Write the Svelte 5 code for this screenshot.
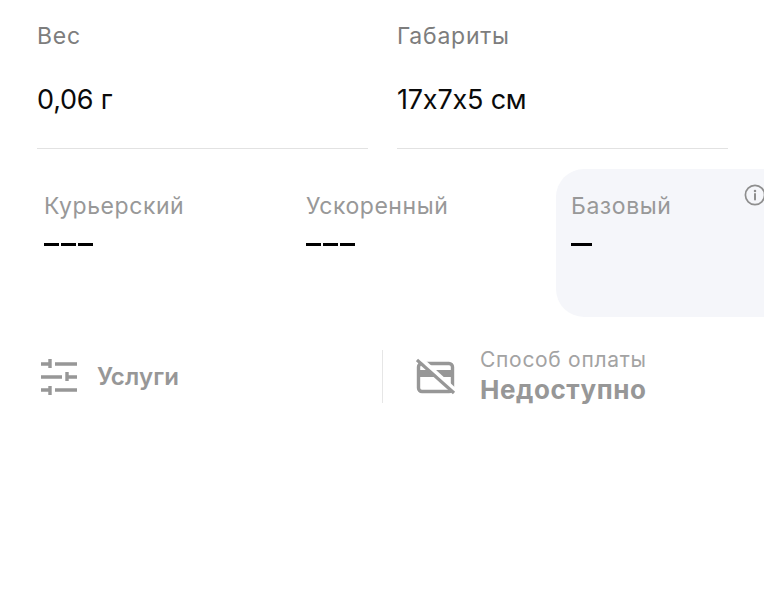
<script lang="ts">
	const specs = [
		{ label: "Вес", value: "0,06 г" },
		{ label: "Габариты", value: "17x7x5 см" }
	];
	const tariffs = [
		{ name: "Курьерский", price: "---" },
		{ name: "Ускоренный", price: "---" }
	];
</script>

<div class="page">
	<div class="specs">
		{#each specs as s}
			<div class="spec">
				<div class="spec-label">{s.label}</div>
				<div class="spec-value">{s.value}</div>
			</div>
		{/each}
	</div>

	<div class="tariffs">
		{#each tariffs as t}
			<div class="tariff">
				<div class="tariff-name">{t.name}</div>
				<div class="dashes">
					{#each t.price as _}
						<span class="dash"></span>
					{/each}
				</div>
			</div>
		{/each}
		<div class="tariff active">
			<div class="tariff-name">Базовый</div>
			<div class="dashes"><span class="dash long"></span></div>
			<svg class="info" width="22" height="22" viewBox="0 0 22 22" fill="none">
				<circle cx="11" cy="11" r="9.6" stroke="#8e8e8e" stroke-width="1.7" />
				<circle cx="11" cy="6.9" r="1.25" fill="#8e8e8e" />
				<path d="M11 10v5.6" stroke="#8e8e8e" stroke-width="2" stroke-linecap="round" />
			</svg>
		</div>
	</div>

	<div class="actions">
		<div class="services">
			<svg width="38" height="36" viewBox="0 0 38 36" fill="none" stroke="#979797" stroke-width="3.4">
				<path d="M1 5h8M10 0v9M15 5h22" />
				<path d="M1 18h21M27 13v9M27 18h10" />
				<path d="M1 31h8M10 27v9M15 31h22" />
			</svg>
			<span class="services-label">Услуги</span>
		</div>
		<div class="payment">
			<svg width="40" height="38" viewBox="0 0 40 38" fill="none">
				<rect x="2.5" y="5.5" width="34" height="28" rx="3.5" stroke="#979797" stroke-width="3.4" />
				<path d="M2 12h36v7H2z" fill="#979797" />
				<path d="M4 0l36 33" stroke="#fff" stroke-width="4" />
				<path d="M1 2l37 33" stroke="#979797" stroke-width="3.2" />
			</svg>
			<div class="payment-text">
				<div class="payment-label">Способ оплаты</div>
				<div class="payment-value">Недоступно</div>
			</div>
		</div>
	</div>
</div>

<style>
	:global(body) {
		background: #fff;
		overflow: hidden;
	}
	.page {
		width: 764px;
		height: 600px;
		overflow: hidden;
		font-family: Inter, "Liberation Sans", sans-serif;
	}
	.specs {
		display: grid;
		grid-template-columns: 331px 331px;
		column-gap: 29px;
		padding: 23px 0 0 37px;
	}
	.spec {
		height: 125px;
		border-bottom: 1.5px solid #e2e2e2;
	}
	.spec-label {
		font-size: 23px;
		line-height: 27px;
		color: #7d7d7d;
		letter-spacing: 0.75px;
	}
	.spec-value {
		margin-top: 35px;
		font-size: 27px;
		line-height: 30px;
		color: #0a0a0a;
		letter-spacing: -0.2px;
	}
	.tariffs {
		display: flex;
		margin-top: 20px;
		height: 148px;
	}
	.tariff {
		position: relative;
		padding: 23px 0 0 44px;
		box-sizing: border-box;
	}
	.tariff:first-child {
		width: 306px;
	}
	.tariff:nth-child(2) {
		width: 250px;
		padding-left: 0;
	}
	.tariff.active {
		flex: 1;
		padding-left: 15px;
		background: #f5f6fa;
		border-radius: 28px 0 0 28px;
	}
	.tariff-name {
		font-size: 23px;
		line-height: 28px;
		color: #989898;
		letter-spacing: 0.55px;
	}
	.dashes {
		display: flex;
		gap: 2px;
		margin-top: 23px;
	}
	.dash {
		width: 15px;
		height: 3px;
		background: #000;
	}
	.dash.long {
		width: 21px;
	}
	.info {
		position: absolute;
		top: 15px;
		left: 188px;
	}
	.actions {
		display: flex;
		align-items: center;
		margin-top: 33px;
		height: 53px;
	}
	.services {
		display: flex;
		align-items: center;
		gap: 19px;
		width: 383px;
		height: 100%;
		padding-left: 40px;
		box-sizing: border-box;
		border-right: 1.5px solid #e6e6e6;
	}
	.services-label {
		font-size: 24px;
		font-weight: 600;
		color: #979797;
		letter-spacing: 0.1px;
	}
	.payment {
		display: flex;
		align-items: center;
		gap: 24px;
		padding-left: 33px;
	}
	.payment-label {
		font-size: 21px;
		line-height: 24px;
		color: #a3a3a3;
		letter-spacing: 0.7px;
	}
	.payment-value {
		margin-top: 3px;
		font-size: 26px;
		line-height: 30px;
		font-weight: 700;
		color: #979797;
		letter-spacing: 0.55px;
	}
</style>
